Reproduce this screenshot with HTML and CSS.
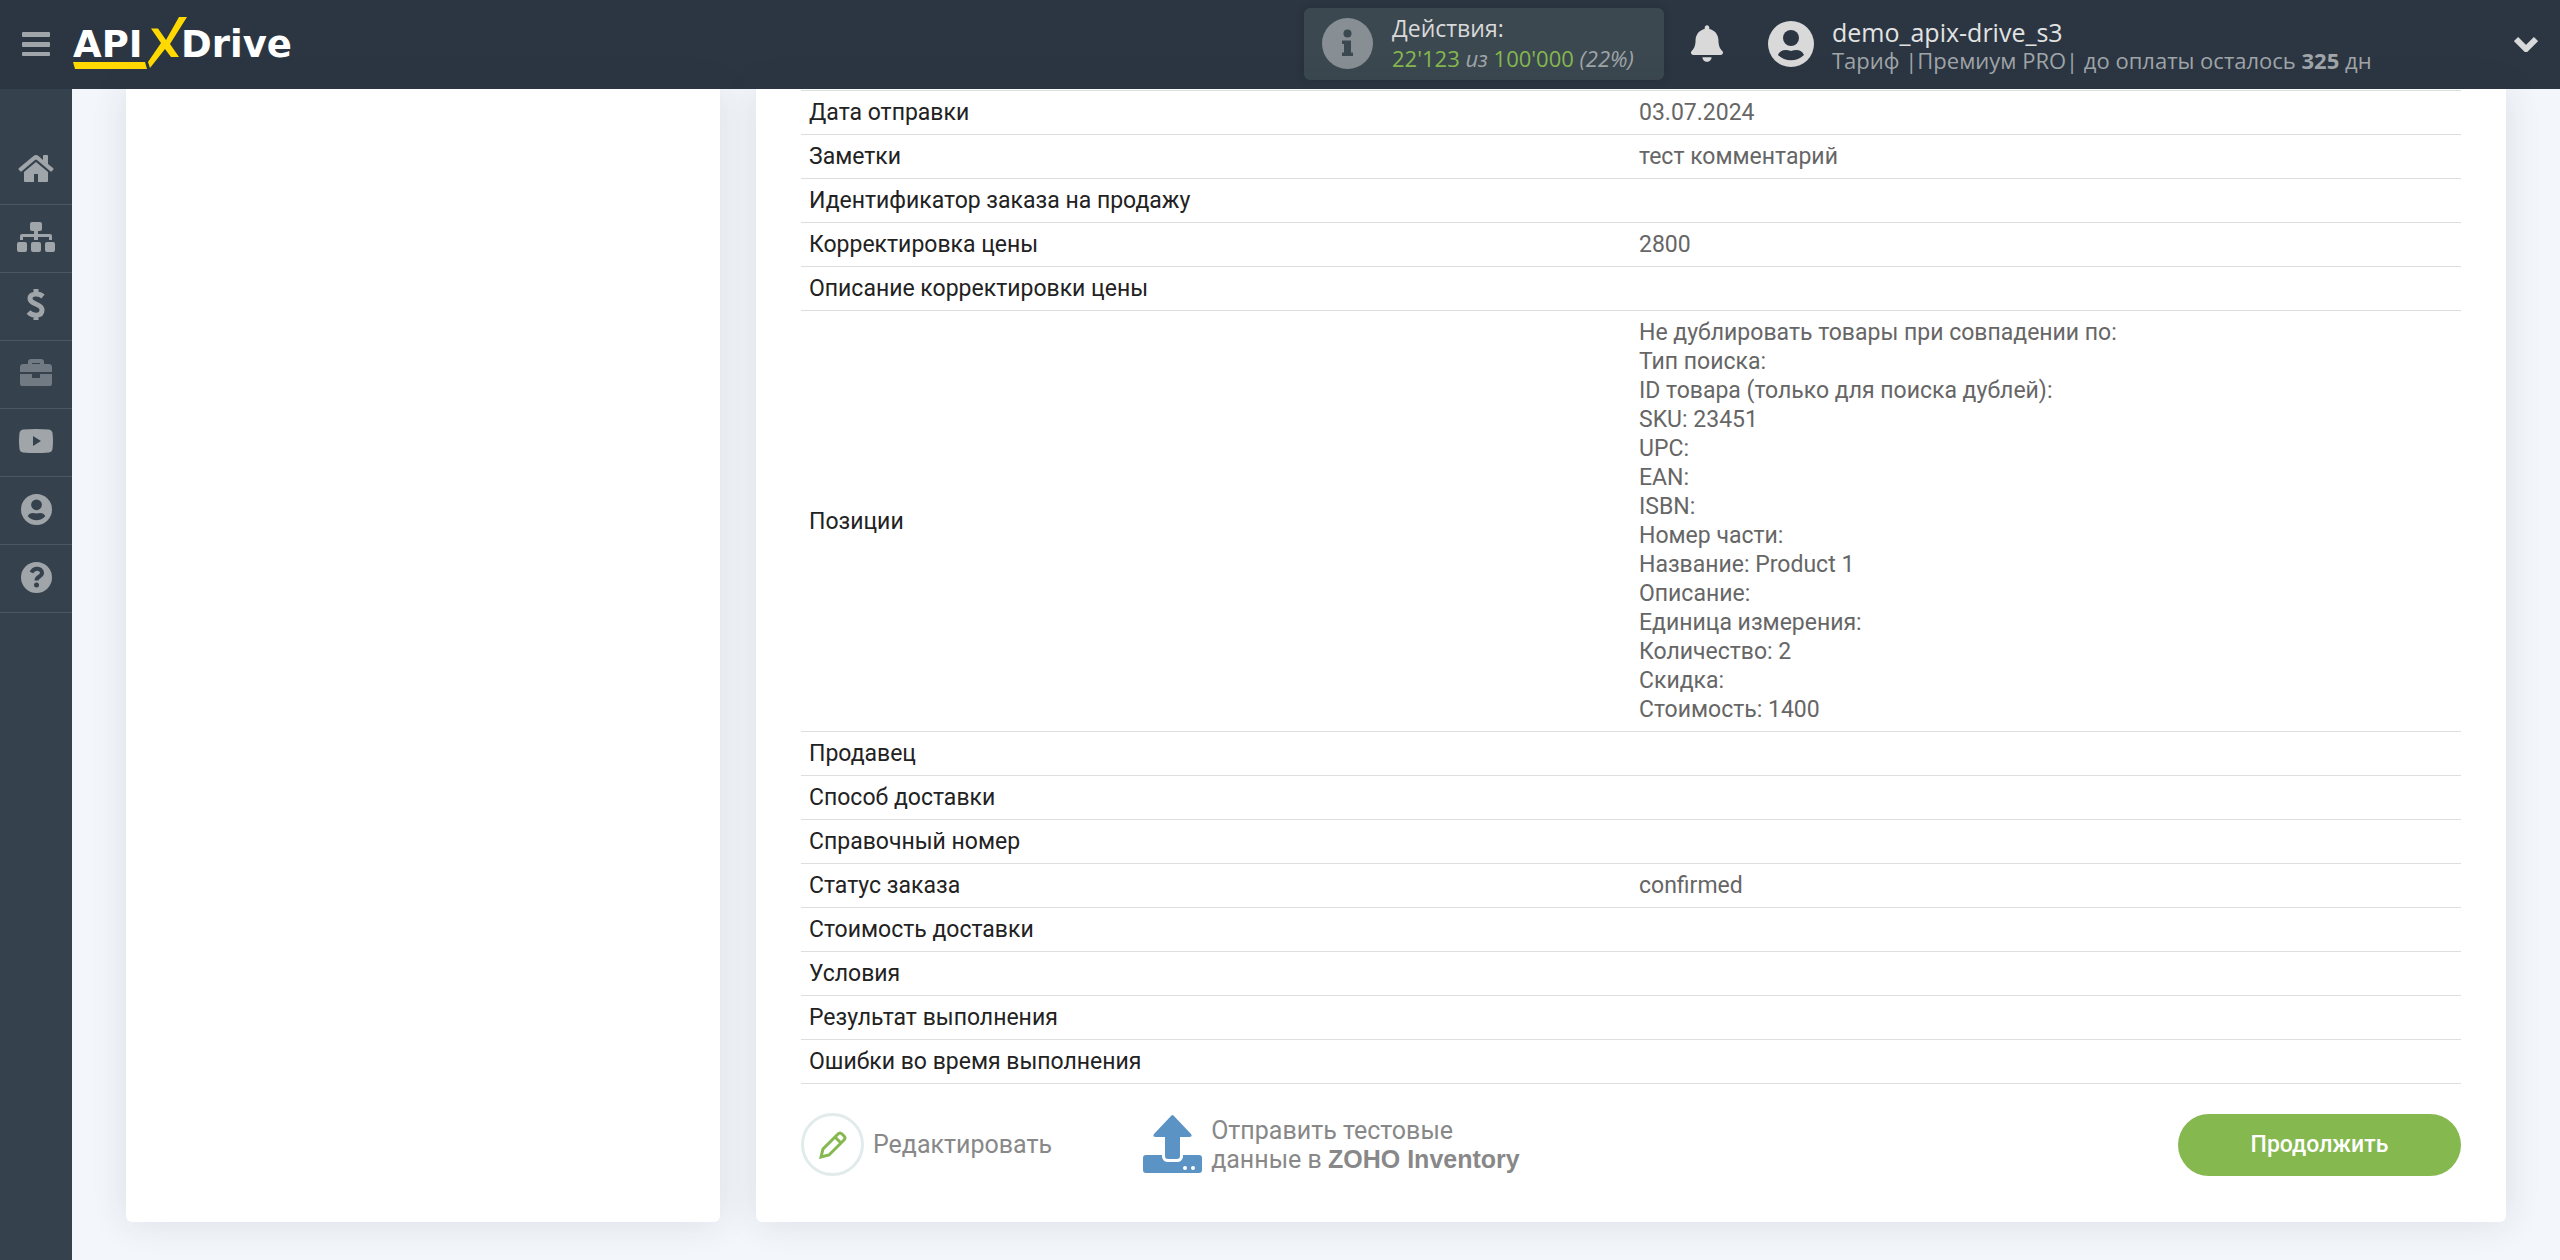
FILE: index.html
```html
<!DOCTYPE html>
<html lang="ru">
<head>
<meta charset="utf-8">
<title>ApiX-Drive</title>
<link rel="stylesheet" href="styles.css">
</head>
<body>
<header class="topbar">
  <button class="icon-button menu-button" type="button" aria-label="Меню">
    <svg width="28" height="24" viewBox="0 0 28 24" fill="currentColor"><rect width="28" height="5" rx="1"/><rect y="10" width="28" height="5" rx="1"/><rect y="20" width="28" height="4" rx="1"/></svg>
  </button>
  <a class="logo" href="#" aria-label="APIXDrive">
    <svg width="222" height="54" viewBox="0 0 222 54">
      <text class="logo-text" x="0" y="40">API</text>
      <text class="logo-text" x="108" y="40">Drive</text>
      <path fill="#ffd900" d="M0 45H72L74 52H2ZM78 11.500H85L93 23 106 0H114L97 27 106 40H98L92 32 77 51 75 45 88 26Z"/>
    </svg>
  </a>
  <div class="actions-box">
    <svg width="51" height="51" viewBox="0 0 51 51"><circle cx="25.500" cy="25.500" r="25.500" fill="#878e94"/><g fill="#3b4850"><circle cx="25.500" cy="15.500" r="4"/><path d="M20 22.500H29V34.500H31V38H20V34.500H22V26H20Z"/></g></svg>
    <div class="actions-text">
      <div class="actions-title">Действия:</div>
      <div class="actions-count"><span class="green">22'123</span> <em>из</em> <span class="green">100'000</span> <em>(22%)</em></div>
    </div>
  </div>
  <button class="icon-button bell-button" type="button" aria-label="Уведомления">
    <svg width="32" height="37" viewBox="0 0 448 512" fill="currentColor"><path d="M224 512c35.320 0 63.970-28.650 63.970-64H160.030c0 35.350 28.650 64 63.970 64zm215.390-149.710c-19.320-20.760-55.470-51.990-55.470-154.290 0-77.700-54.480-139.900-127.940-155.160V32c0-17.670-14.320-32-31.980-32s-31.980 14.330-31.980 32v20.840C118.560 68.100 64.080 130.300 64.080 208c0 102.300-36.150 133.530-55.470 154.290-6 6.450-8.660 14.160-8.610 21.710.110 16.400 12.980 32 32.100 32h383.800c19.120 0 32-15.600 32.100-32 .050-7.550-2.610-15.270-8.610-21.710z"/></svg>
  </button>
  <button class="account" type="button">
    <svg width="46" height="46" viewBox="0 0 46 46"><circle cx="23" cy="23" r="23" fill="#d9d9d9"/><g fill="#2b3642"><circle cx="23" cy="17" r="8"/><path d="M10 34C12 29 17 28 23 30 29 28 34 29 36 34 29 41 17 41 10 34Z"/></g></svg>
    <span class="account-text">
      <span class="account-name">demo_apix-drive_s3</span>
      <span class="account-plan">Тариф |Премиум PRO| до оплаты осталось <b>325</b> дн</span>
    </span>
    <svg class="chevron" width="24" height="16" viewBox="0 0 24 16" fill="none" stroke="#d9d9d9" stroke-width="6"><path d="M2 3 12 13 22 3"/></svg>
  </button>
</header>
<div class="layout">
  <nav class="sidebar" aria-label="Разделы">
    <a class="side-link" href="#" aria-label="Главная"><svg width="36" height="28" viewBox="0 0 36 28" fill="currentColor"><path d="M18 7 30 17V26Q30 27 29 27H20V19H16V27H7Q6 27 6 26V17ZM15.500 1Q18-1 20.500 1L25 5V1Q25 0 26 0H29Q30 0 30 1V9L35 13Q36 14 35 15L34 16Q33 17 32 16L19 5Q18 4 17 5L4 16Q3 17 2 16L1 15Q0 14 1 13Z"/></svg></a>
    <a class="side-link" href="#" aria-label="Связи"><svg width="40" height="30" viewBox="0 0 40 30" fill="currentColor"><rect x="14" width="12" height="9" rx="2"/><rect x="1" y="20" width="10" height="10" rx="2"/><rect x="15" y="20" width="10" height="10" rx="2"/><rect x="29" y="20" width="10" height="10" rx="2"/><path d="M18 8H22V12H34Q36 12 36 14V18H33V15H22V18H18V15H7V18H4V14Q4 12 6 12H18Z"/></svg></a>
    <a class="side-link" href="#" aria-label="Оплата"><svg width="20" height="32" viewBox="0 0 20 32" fill="none" stroke="currentColor" stroke-width="5"><path d="M10 0V5M10 26V31M17 7.500C13 4 4 4 4 9.500 4 16 16 14 16 21 16 28 6 27 2.500 23"/></svg></a>
    <a class="side-link dim" href="#" aria-label="Инструменты"><svg width="32" height="28" viewBox="0 0 32 28" fill="currentColor"><path fill-rule="evenodd" d="M8 5V3Q8 0 11 0H21Q24 0 24 3V5H29Q32 5 32 8V13H0V8Q0 5 3 5ZM12 5H20V4H12ZM0 15H12V19H20V15H32V25Q32 27 30 27H2Q0 27 0 25Z"/></svg></a>
    <a class="side-link" href="#" aria-label="Видео"><svg width="34" height="24" viewBox="0 0 34 24" fill="currentColor"><path fill-rule="evenodd" d="M4 .500Q17-.500 30 .500 33 1 33.500 4 34.500 12 33.500 20 33 23 30 23.500 17 24.500 4 23.500 1 23 .500 20-.500 12 .500 4 1 1 4 .500ZM14 7V17L22 12Z"/></svg></a>
    <a class="side-link" href="#" aria-label="Профиль"><svg width="31" height="31" viewBox="0 0 46 46"><circle cx="23" cy="23" r="23" fill="currentColor"/><g fill="#36414e"><circle cx="23" cy="16" r="8"/><path d="M10 33C12 28 17 27 23 29 29 27 34 28 36 33 29 41 17 41 10 33Z"/></g></svg></a>
    <a class="side-link" href="#" aria-label="Помощь"><svg width="31" height="31" viewBox="0 0 31 31"><circle cx="15.500" cy="15.500" r="15.500" fill="currentColor"/><path d="M10.500 10.500C13 5 21 6 21 11 21 15 15.500 14 15.500 18.500" fill="none" stroke="#36414e" stroke-width="4"/><circle cx="15.500" cy="23" r="2.500" fill="#36414e"/></svg></a>
  </nav>
  <main class="content">
    <section class="card"></section>
    <section class="card card-main">
      <table class="data">
        <tbody>
        <tr><th scope="row">Дата отправки</th><td>03.07.2024</td></tr>
        <tr><th scope="row">Заметки</th><td>тест комментарий</td></tr>
        <tr><th scope="row">Идентификатор заказа на продажу</th><td></td></tr>
        <tr><th scope="row">Корректировка цены</th><td>2800</td></tr>
        <tr><th scope="row">Описание корректировки цены</th><td></td></tr>
        <tr><th scope="row">Позиции</th><td>Не дублировать товары при совпадении по:<br>Тип поиска:<br>ID товара (только для поиска дублей):<br>SKU: 23451<br>UPC:<br>EAN:<br>ISBN:<br>Номер части:<br>Название: Product 1<br>Описание:<br>Единица измерения:<br>Количество: 2<br>Скидка:<br>Стоимость: 1400</td></tr>
        <tr><th scope="row">Продавец</th><td></td></tr>
        <tr><th scope="row">Способ доставки</th><td></td></tr>
        <tr><th scope="row">Справочный номер</th><td></td></tr>
        <tr><th scope="row">Статус заказа</th><td>confirmed</td></tr>
        <tr><th scope="row">Стоимость доставки</th><td></td></tr>
        <tr><th scope="row">Условия</th><td></td></tr>
        <tr><th scope="row">Результат выполнения</th><td></td></tr>
        <tr><th scope="row">Ошибки во время выполнения</th><td></td></tr>
        </tbody>
      </table>
      <div class="card-actions">
        <a class="action edit" href="#">
          <span class="edit-circle"><svg width="28" height="28" viewBox="0 0 28 28" fill="none" stroke="#85b84f" stroke-width="3"><path d="M2 26 4 18 19 3Q21 1 23 3L25 5Q27 7 25 9L10 24ZM16 6 22 12"/></svg></span>
          Редактировать
        </a>
        <a class="action" href="#">
          <svg width="59" height="59" viewBox="0 0 59 59" fill="#5b93c5"><path d="M29 0Q30 0 31 1L48 19Q50 22 46 22H37V41Q37 44 34 44H25Q22 44 22 41V22H13Q9 22 11 19L28 1ZM3 40H19V42Q20 47 25 47H34Q39 47 40 42V40H56Q59 40 59 43V55Q59 58 56 58H3Q0 58 0 55V43Q0 40 3 40Z"/><g fill="#fff"><circle cx="42" cy="53" r="2"/><circle cx="50" cy="53" r="2"/></g></svg>
          <span>Отправить тестовые<br>данные в <b class="service">ZOHO Inventory</b></span>
        </a>
        <button class="continue" type="button">Продолжить</button>
      </div>
    </section>
  </main>
</div>
</body>
</html>
```

FILE: styles.css
```css
* { box-sizing: border-box; }

body {
  display: flex;
  flex-direction: column;
  min-height: 100vh;
  margin: 0;
  background: #f3f6fb;
  font-family: Roboto, sans-serif;
  font-size: 23px;
  line-height: 29px;
}

a { color: inherit; text-decoration: none; }
button { padding: 0; border: 0; background: none; font: inherit; cursor: pointer; }
svg { display: block; flex: none; }

.topbar {
  display: flex;
  align-items: center;
  height: 89px;
  padding: 0 22px 2px;
  background: #2b3642;
  color: #d9d9d9;
  font-family: "Open Sans", "Noto Sans", sans-serif;
}

.menu-button { color: #a0a5a9; }
.logo { margin: 0 auto 0 23px; }
.logo-text { fill: #fff; font: 700 37px "DejaVu Sans", sans-serif; }

.actions-box {
  display: flex;
  align-items: center;
  gap: 19px;
  width: 360px;
  height: 72px;
  padding: 0 18px;
  border-radius: 6px;
  background: #3b4850;
  box-shadow: 0 0 8px rgba(0, 0, 0, .15);
}

.actions-text { padding-bottom: 2px; line-height: 30px; white-space: nowrap; }
.actions-count { color: #a0a5a9; font-size: 22px; }
.green { color: #85b84f; }

.bell-button { margin: 0 45px 0 27px; color: #d9d9d9; }

.account { display: flex; flex: none; align-items: center; gap: 18px; width: 770px; color: #a0a5a9; text-align: left; }
.account-text { display: flex; flex-direction: column; padding-top: 4px; line-height: 28px; white-space: nowrap; }
.account-name { color: #e3e3e3; font-size: 25px; }
.account-plan { font-size: 22px; }
.chevron { margin-left: auto; }

.layout { display: flex; flex: 1; }

.sidebar { flex: none; width: 72px; padding-top: 48px; background: #36414e; color: #a0a5a9; }

.side-link {
  display: flex;
  align-items: center;
  justify-content: center;
  height: 68px;
  padding-bottom: 3px;
  border-bottom: 1px solid #4b5763;
}

.dim { color: #717a83; }

.content {
  display: grid;
  flex: 1;
  grid-template-columns: minmax(0, 297fr) minmax(0, 875fr);
  gap: 36px;
  padding: 0 54px 38px;
}

.card { border-radius: 0 0 6px 6px; background: #fff; box-shadow: 0 0 36px rgba(40, 50, 60, .12); }
.card-main { padding: 1px 45px 46px; }

.data { width: 100%; border-collapse: separate; border-spacing: 0; border-top: 1px solid #dcdfe0; table-layout: fixed; }
.data th,
.data td { height: 44px; padding: 7px 8px; border-bottom: 1px solid #dcdfe0; text-align: left; vertical-align: middle; }
.data th { color: #222; font-weight: 400; }
.data td { color: #666; }

.card-actions { display: flex; align-items: center; gap: 91px; padding-top: 29px; color: #888; font-size: 25px; }
.action { display: flex; align-items: center; gap: 9px; }
.service { font-family: "Liberation Sans", Arial, sans-serif; }

.edit-circle {
  display: flex;
  align-items: center;
  justify-content: center;
  width: 63px;
  height: 63px;
  border: 3px solid #e2ebeb;
  border-radius: 50%;
}

.continue {
  width: 283px;
  height: 62px;
  margin-left: auto;
  border-radius: 31px;
  background: #85b84f;
  color: #fff;
  font-size: 23px;
  font-weight: 500;
}
```
